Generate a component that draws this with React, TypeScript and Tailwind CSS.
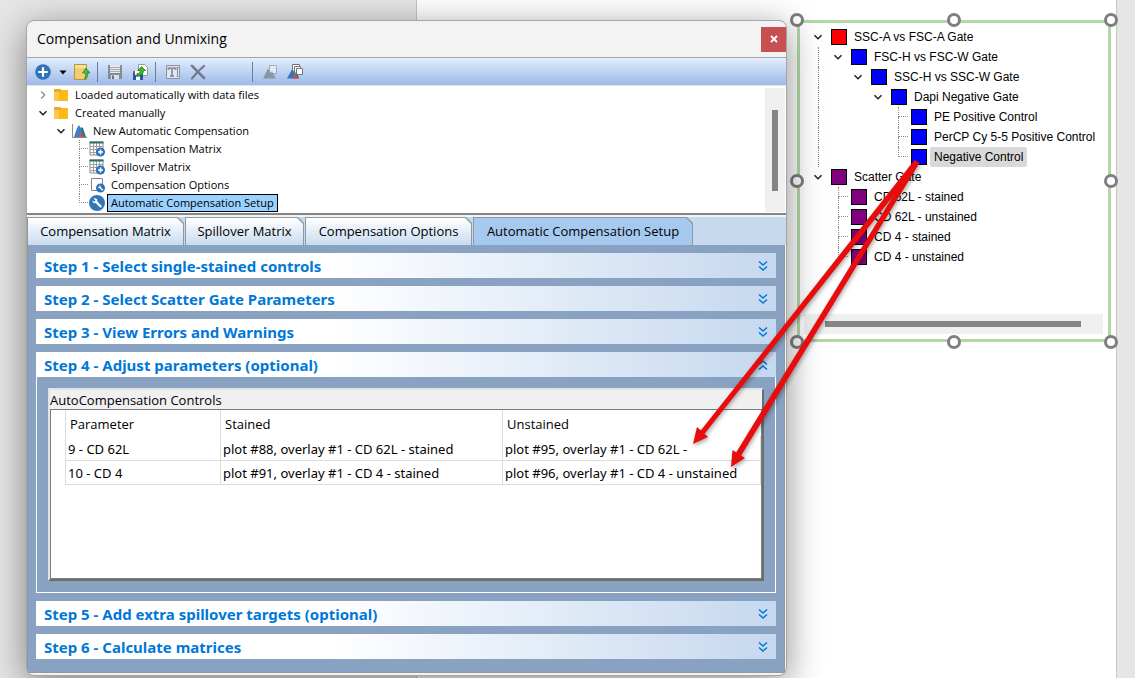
import React, { useState } from "react";
import clsx from "clsx";

type TreeItem = {
  label: string;
  depth: number;
  kind: "folder" | "histogram" | "matrix" | "options" | "setup";
  expanded?: boolean;
  last?: boolean;
};

type Gate = {
  label: string;
  depth: number;
  color: "red" | "blue" | "purple";
  leaf?: boolean;
  last?: boolean;
  trunk?: boolean; // row sits beside the line that joins the two root gates
};

const treeItems: TreeItem[] = [
  { label: "Loaded automatically with data files", depth: 0, kind: "folder", expanded: false },
  { label: "Created manually", depth: 0, kind: "folder", expanded: true },
  { label: "New Automatic Compensation", depth: 1, kind: "histogram", expanded: true },
  { label: "Compensation Matrix", depth: 2, kind: "matrix" },
  { label: "Spillover Matrix", depth: 2, kind: "matrix" },
  { label: "Compensation Options", depth: 2, kind: "options" },
  { label: "Automatic Compensation Setup", depth: 2, kind: "setup", last: true },
];

const gates: Gate[] = [
  { label: "SSC-A vs FSC-A Gate", depth: 0, color: "red" },
  { label: "FSC-H vs FSC-W Gate", depth: 1, color: "blue", trunk: true },
  { label: "SSC-H vs SSC-W Gate", depth: 2, color: "blue", trunk: true },
  { label: "Dapi Negative Gate", depth: 3, color: "blue", trunk: true },
  { label: "PE Positive Control", depth: 4, color: "blue", leaf: true, trunk: true },
  { label: "PerCP Cy 5-5 Positive Control", depth: 4, color: "blue", leaf: true, trunk: true },
  { label: "Negative Control", depth: 4, color: "blue", leaf: true, last: true, trunk: true },
  { label: "Scatter Gate", depth: 0, color: "purple" },
  { label: "CD 62L - stained", depth: 1, color: "purple", leaf: true },
  { label: "CD 62L - unstained", depth: 1, color: "purple", leaf: true },
  { label: "CD 4 - stained", depth: 1, color: "purple", leaf: true },
  { label: "CD 4 - unstained", depth: 1, color: "purple", leaf: true, last: true },
];

const tabs = [
  { label: "Compensation Matrix", width: "w-[157px]" },
  { label: "Spillover Matrix", width: "w-[119px]" },
  { label: "Compensation Options", width: "w-[167px]" },
  { label: "Automatic Compensation Setup", width: "w-[220px]" },
];

const steps = [
  "Step 1 - Select single-stained controls",
  "Step 2 - Select Scatter Gate Parameters",
  "Step 3 - View Errors and Warnings",
  "Step 4 - Adjust parameters (optional)",
  "Step 5 - Add extra spillover targets (optional)",
  "Step 6 - Calculate matrices",
];

const controls = [
  { parameter: "9 - CD 62L", stained: "plot #88, overlay #1 - CD 62L - stained", unstained: "plot #95, overlay #1 - CD 62L -" },
  { parameter: "10 - CD 4", stained: "plot #91, overlay #1 - CD 4 - stained", unstained: "plot #96, overlay #1 - CD 4 - unstained" },
];

const gateColors = {
  red: "bg-[#ff0000]",
  blue: "bg-[#0000ff]",
  purple: "bg-[#800080]",
};

const handles = [
  "-left-[10px] -top-[10px]",
  "left-[calc(50%-7px)] -top-[10px]",
  "-right-[10px] -top-[10px]",
  "-left-[10px] top-[calc(50%-7px)]",
  "-right-[10px] top-[calc(50%-7px)]",
  "-left-[10px] -bottom-[10px]",
  "left-[calc(50%-7px)] -bottom-[10px]",
  "-right-[10px] -bottom-[10px]",
];

function Chevron({ open = true }: { open?: boolean }) {
  return (
    <svg viewBox="0 0 10 10" className="size-[10px]" fill="none">
      {open ? (
        <path d="M1.5 3.2 L5 6.7 L8.5 3.2" stroke="#222" strokeWidth="1.5" />
      ) : (
        <path d="M3.2 1.5 L6.7 5 L3.2 8.5" stroke="#8a8a8a" strokeWidth="1.2" />
      )}
    </svg>
  );
}

// dotted elbow in front of a leaf row
function Elbow({ last }: { last?: boolean }) {
  return (
    <span className="flex w-1/2 flex-col self-stretch ml-auto">
      <span className="h-1/2 border-b border-l border-dotted border-[#8c8c8c]" />
      <span className={clsx("h-1/2 border-dotted border-[#8c8c8c]", !last && "border-l")} />
    </span>
  );
}

function Wrench() {
  return (
    <path
      d="M4.2 3.2 L6 5 L5.2 6.2 L3.4 5.8 L2.8 4.6 C2.6 6.8 4.2 8.2 6.3 7.7 L10 11.6 C11.2 12.8 13 11.4 11.9 10 L8 6.2 C8.5 4 6.6 2.3 4.2 3.2 Z"
      fill="#fff"
    />
  );
}

function TreeIcon({ kind }: { kind: TreeItem["kind"] }) {
  if (kind === "folder") {
    return (
      <svg viewBox="0 0 16 16" className="size-4">
        <path d="M1 3h14v11H1z" fill="#fdb91a" />
        <path d="M1 5h5v9H1z" fill="#ffc74a" />
        <path d="M1 2h7v3H1z" fill="#e8ac2c" />
      </svg>
    );
  }
  if (kind === "histogram") {
    return (
      <svg viewBox="0 0 16 16" className="size-4">
        <path d="M6 14 L10 4 L12 5 L15 14 Z" fill="#2a7a78" />
        <path d="M3 14 L6 5 L8 2 L10 6 L12 14 Z" fill="#3a80c4" />
        <path d="M7 14 L10 10 L13 14 Z" fill="#e04848" />
        <path d="M1.5 1v13.5H16" fill="none" stroke="#8a8a90" />
      </svg>
    );
  }
  if (kind === "matrix") {
    return (
      <svg viewBox="0 0 16 16" className="size-4">
        <path d="M1 1h13v13H1z" fill="#fff" stroke="#8a8a8a" />
        <path d="M1 5.5h13M1 8.5h13M1 11.5h13M4.5 2v12M7.5 2v12M10.5 2v12" stroke="#a0a0a0" />
        <path d="M0.5 1.5h14" stroke="#2f6f69" strokeWidth="2" />
        <circle cx="11.5" cy="11" r="4.5" fill="#2c72b8" />
        <path d="M11.5 8.5v5M9 11h5" stroke="#fff" strokeWidth="1.6" />
      </svg>
    );
  }
  if (kind === "options") {
    return (
      <svg viewBox="0 0 16 16" className="size-4">
        <path d="M2.5 1.5h11v12h-11z" fill="#fff" stroke="#858585" />
        <circle cx="11.5" cy="11" r="4.5" fill="#2c72b8" />
        <g transform="translate(7.3 6.8) scale(.57)">
          <Wrench />
        </g>
      </svg>
    );
  }
  return (
    <svg viewBox="0 0 16 16" className="size-4">
      <circle cx="8" cy="8" r="8" fill="#2f76bb" />
      <g transform="translate(.4 .4)">
        <Wrench />
      </g>
    </svg>
  );
}

function DoubleChevron({ up }: { up: boolean }) {
  return (
    <svg viewBox="0 0 10 12" className={clsx("h-3 w-[10px]", up && "rotate-180")} fill="none" stroke="#0078d7" strokeWidth="1.5">
      <path d="M1 1.5 L5 5 L9 1.5 M1 6.5 L5 10 L9 6.5" />
    </svg>
  );
}

function Separator({ className }: { className: string }) {
  return <span className={clsx("h-5 w-px bg-[#6b7c99]", className)} />;
}

function Toolbar() {
  return (
    <div className="flex h-7 items-center border-b border-[#e4e4e4] bg-linear-to-b from-[#e3edfc] to-[#9dbae8] pl-2">
      <button aria-label="Add">
        <svg viewBox="0 0 16 16" className="size-4">
          <circle cx="8" cy="8" r="7.8" fill="#2d74bb" />
          <path d="M8 3.2v9.6M3.2 8h9.6" stroke="#fff" strokeWidth="2.2" />
        </svg>
      </button>
      <button aria-label="Add menu" className="ml-2">
        <svg viewBox="0 0 8 8" className="size-2">
          <path d="M0.5 2.5h7L4 6.5z" fill="#000" />
        </svg>
      </button>
      <button aria-label="Open" className="ml-[7px]">
        <svg viewBox="0 0 16 16" className="size-4">
          <path d="M.5 .5 H12.5 V15.5 H.5 Z" fill="#f0cd70" stroke="#b89440" />
          <path d="M1 1 H12 V4 H1 Z" fill="#f8df98" />
          <path d="M12 4 L16 9 H13.8 C14 12 13.5 14 10.5 15 C11.8 12.5 11.5 11 11.3 9 H8.5 Z" fill="#4fb53a" stroke="#2c8424" strokeWidth=".7" />
        </svg>
      </button>
      <Separator className="ml-[7px]" />
      <button aria-label="Save" className="ml-[9px]">
        <svg viewBox="0 0 16 16" className="size-4">
          <path d="M1 1h14v14H1z" fill="#848c98" />
          <path d="M3 1h10v8H3z" fill="#e4e7eb" />
          <path d="M3 3.5h10M3 5.5h10M3 7.5h10" stroke="#a8aeb6" />
          <path d="M4 11h8v4H4z" fill="#dde1e6" />
          <path d="M5 11.5h2V15H5z" fill="#6a717b" />
        </svg>
      </button>
      <button aria-label="Import" className="ml-[9px]">
        <svg viewBox="0 0 16 16" className="size-4">
          <path d="M6.5 .5h6l3 3v8h-9z" fill="#fff" stroke="#999" />
          <path d="M1 7h10v9H1z" fill="#2458a0" />
          <path d="M3 7h6v4H3z" fill="#fff" />
          <path d="M1 7h2v2H1z" fill="#d83c3c" />
          <path d="M4 12.5h4V16H4z" fill="#fff" />
          <path d="M9.5 2.5 L13.5 6.5 H11.5 C11.5 9.5 9 12 5 12 V9.5 C7.5 9.5 8.3 8.5 8.3 6.5 H6 Z" fill="#3dbb2c" stroke="#1f7a18" strokeWidth=".8" />
        </svg>
      </button>
      <Separator className="ml-[7px]" />
      <button aria-label="Rename" className="ml-[9px]">
        <svg viewBox="0 0 16 16" className="size-4" fill="none" stroke="#8b929e">
          <path d="M1.5 1.5h13v13h-13z" fill="#dfe6f0" />
          <path d="M3.5 6V4.2h7V6M7 4v8.2M5 12.2h4" strokeWidth="1.8" />
          <path d="M12.5 3.5v9M11.5 3.5h2M11.5 12.5h2" />
        </svg>
      </button>
      <button aria-label="Delete" className="ml-[9px]">
        <svg viewBox="0 0 16 16" className="size-4" fill="none" stroke="#737b8a" strokeLinecap="round">
          <path d="M2 1.8 L14 14" strokeWidth="2.6" />
          <path d="M14 2 L8 7.5 L2 14.5" strokeWidth="2.2" />
        </svg>
      </button>
      <Separator className="ml-[46px]" />
      <button aria-label="Gate statistics" className="ml-[9px]">
        <svg viewBox="0 0 16 16" className="size-4">
          <path d="M7.5 1.5h7v8h-7z" fill="#dfe8f6" stroke="#8a929e" strokeDasharray="2 1" />
          <path d="M1 14.5 L6 4.5 L9 9 L10 7.5 L14 14.5 Z" fill="#8c95a3" />
        </svg>
      </button>
      <button aria-label="Copy plots" className="ml-[9px]">
        <svg viewBox="0 0 16 16" className="size-4">
          <path d="M5.5 .5h7v7h-7z" fill="#fff" stroke="#777" />
          <path d="M7.5 2.5h6v7h-6z" fill="#fff" stroke="#777" />
          <path d="M9.5 4.5h6v6h-6z" fill="#fff" stroke="#777" />
          <path d="M7 14.5 L9 7 L12.5 14.5 Z" fill="#357e80" />
          <path d="M0 14.5 L5.5 4.5 L9 14.5 Z" fill="#3674b8" />
          <path d="M5 14.5 L8 10 L11.5 14.5 Z" fill="#e04444" />
        </svg>
      </button>
    </div>
  );
}

function CompensationTree() {
  return (
    <div className="flex justify-between border-b-2 border-[#858585] bg-white pr-px pb-px">
      <ul className="pl-[7px] text-[11px] leading-[18px]">
        {treeItems.map((item) => (
          <li key={item.label} className="flex h-[18px] items-center">
            {item.depth > 0 && <span className={item.depth === 1 ? "w-[18px]" : "w-9"} />}
            <span className="flex w-[18px] items-center justify-center self-stretch">
              {item.depth === 2 ? <Elbow last={item.last} /> : <Chevron open={item.expanded} />}
            </span>
            <span className="ml-px mr-[2px]">
              <TreeIcon kind={item.kind} />
            </span>
            <span
              className={clsx(
                "border px-[3px] leading-4 whitespace-nowrap",
                item.kind === "setup" ? "border-black bg-[#99d1ff]" : "border-transparent"
              )}
            >
              {item.label}
            </span>
          </li>
        ))}
      </ul>
      <div className="mt-[2px] flex w-5 justify-center bg-[#f0f0f0] pt-[22px]">
        <span className="h-[81px] w-[6px] bg-[#858585]" />
      </div>
    </div>
  );
}

function ControlsTable() {
  return (
    <div className="border-2 border-t-[#e3e3e3] border-r-[#6d6d6d] border-b-[#6d6d6d] border-l-[#e3e3e3] bg-[#f0f0f0]">
      <h2 className="h-[19px] text-[13px] leading-[21px]">AutoCompensation Controls</h2>
      <div className="h-[170px] border border-[#7a7f85] bg-white pl-[14px]">
        <table className="w-full table-fixed border-collapse text-left text-[13px] leading-[18px]">
          <thead>
            <tr className="h-[26px]">
              <th className="w-[155px] border-l border-[#dcdcdc] pt-[2px] pl-1 font-normal">Parameter</th>
              <th className="w-[282px] border-l border-[#dcdcdc] pt-[2px] pl-1 font-normal">Stained</th>
              <th className="border-l border-[#dcdcdc] pt-[2px] pl-1 font-normal">Unstained</th>
            </tr>
          </thead>
          <tbody className="font-['Noto_Sans',sans-serif]">
            {controls.map((row) => (
              <tr key={row.parameter} className="h-6">
                <td className="border-x border-b border-[#dcdcdc] pt-[2px] pl-[2px]">{row.parameter}</td>
                <td className="border-x border-b border-[#dcdcdc] pt-[2px] pl-[2px]">{row.stained}</td>
                <td className="border-x border-b border-[#dcdcdc] pt-[2px] pl-[2px]">{row.unstained}</td>
              </tr>
            ))}
          </tbody>
        </table>
      </div>
    </div>
  );
}

function CompensationWindow() {
  const [activeTab, setActiveTab] = useState(3);
  const [openStep, setOpenStep] = useState(3);

  return (
    <section className="relative z-10 min-w-0 flex-1 overflow-hidden rounded-lg border border-[#a5a5a5] bg-[#f3f3f3] pb-[2px] shadow-[0_8px_36px_rgba(0,0,0,0.45)]">
      <header className="flex h-[37px] items-center justify-between border-b border-[#a5a5a5] pl-[10px]">
        <h1 className="text-[14px] leading-5">Compensation and Unmixing</h1>
        <button aria-label="Close" className="flex size-[25px] items-center justify-center bg-[#c75050]">
          <svg viewBox="0 0 8 8" className="size-2" stroke="#fff" strokeWidth="1.8">
            <path d="M1 1l6 6M7 1l-6 6" />
          </svg>
        </button>
      </header>
      <Toolbar />
      <CompensationTree />

      <div className="mt-[2px] flex h-7 gap-px bg-[#c7d9ef]">
        {tabs.map((tab, i) => (
          <button
            key={tab.label}
            onClick={() => setActiveTab(i)}
            className={clsx(
              "bg-[#8f9a9c] px-px pt-px [clip-path:polygon(0_0,calc(100%-6px)_0,100%_6px,100%_100%,0_100%)]",
              tab.width
            )}
          >
            <span
              className={clsx(
                "flex h-full items-center justify-center pt-px text-[13px] whitespace-nowrap [clip-path:polygon(0_0,calc(100%-6px)_0,100%_6px,100%_100%,0_100%)]",
                i === activeTab ? "bg-[#a6c9ef]" : "bg-linear-to-b from-white to-[#c9dbf0]"
              )}
            >
              {tab.label}
            </span>
          </button>
        ))}
      </div>

      <div className="mr-px flex flex-col gap-2 border border-t-0 border-[#8f9a9c] bg-[#89a2c1] px-2 pt-2 pb-[13px]">
        {steps.map((step, i) => (
          <div key={step}>
            <button
              onClick={() => setOpenStep(i === openStep ? -1 : i)}
              aria-expanded={i === openStep}
              className="flex h-[25px] w-full items-center justify-between bg-linear-to-r from-white from-40% to-[#c5d8ef] px-2 pt-px font-['Noto_Sans',sans-serif] text-[15px] font-bold text-[#0078d7]"
            >
              {step}
              <DoubleChevron up={i === openStep} />
            </button>
            {i === openStep && (
              <div className="border-x border-b border-white p-[11px]">
                <ControlsTable />
              </div>
            )}
          </div>
        ))}
      </div>
    </section>
  );
}

function GatePanel() {
  return (
    <aside className="relative flex h-[322px] w-[314px] shrink-0 flex-col justify-between border-[3px] border-[#b2d8a8] bg-white pt-1 pb-[5px] font-['Liberation_Sans',sans-serif]">
      <ul className="pl-2 text-[12px]">
        {gates.map((gate) => (
          <li key={gate.label} className="flex h-5 items-center">
            {Array.from({ length: gate.depth }).map((_, level) => (
              <span key={level} className="flex w-5 justify-end self-stretch">
                {level === 0 && gate.trunk && <span className="w-1/2 border-l border-dotted border-[#8c8c8c]" />}
              </span>
            ))}
            <span className="flex w-5 items-center justify-center self-stretch">
              {gate.leaf ? <Elbow last={gate.last} /> : <Chevron />}
            </span>
            <span className={clsx("ml-[3px] size-4 border border-black", gateColors[gate.color])} />
            <span
              className={clsx(
                "ml-[3px] px-1 leading-5 whitespace-nowrap",
                gate.label === "Negative Control" && "rounded-xs bg-[#d9d9d9]"
              )}
            >
              {gate.label}
            </span>
          </li>
        ))}
      </ul>
      <div className="mr-[5px] ml-1 flex h-5 items-center bg-[#f0f0f0] pr-[22px] pl-[21px]">
        <span className="h-[6px] flex-1 bg-[#858585]" />
      </div>
      {handles.map((position) => (
        <span key={position} className={clsx("absolute size-[14px] rounded-full border-[3px] border-[#7f7f7f] bg-white", position)} />
      ))}
    </aside>
  );
}

export default function App() {
  return (
    <main className="relative flex min-h-screen items-start gap-[10px] overflow-hidden bg-[#e6e6e6] pt-5 pr-6 pb-[2px] pl-[26px] font-['Open_Sans','Noto_Sans',sans-serif] text-black">
      {/* document page behind the windows */}
      <div className="absolute inset-y-0 right-[18px] left-[416px] border-x border-[#c6c6c6] bg-white" />

      <CompensationWindow />
      <GatePanel />

      {/* arrows from the Negative Control gate to the unstained cells */}
      <svg viewBox="0 0 240 320" className="pointer-events-none absolute top-[155px] right-[205px] z-20 h-[320px] w-[240px] drop-shadow-[1px_2px_2px_rgba(0,0,0,0.35)]" fill="#e80c0c">
        <path d="M224.5 5 L229.5 8 L12 282 L8 279 Z" />
        <path d="M3 289 L7 272 L18 282 Z" />
        <path d="M224.5 6 L229.5 8 L49 304 L44 301 Z" />
        <path d="M41 312 L42.5 295 L55 303 Z" />
      </svg>
    </main>
  );
}
